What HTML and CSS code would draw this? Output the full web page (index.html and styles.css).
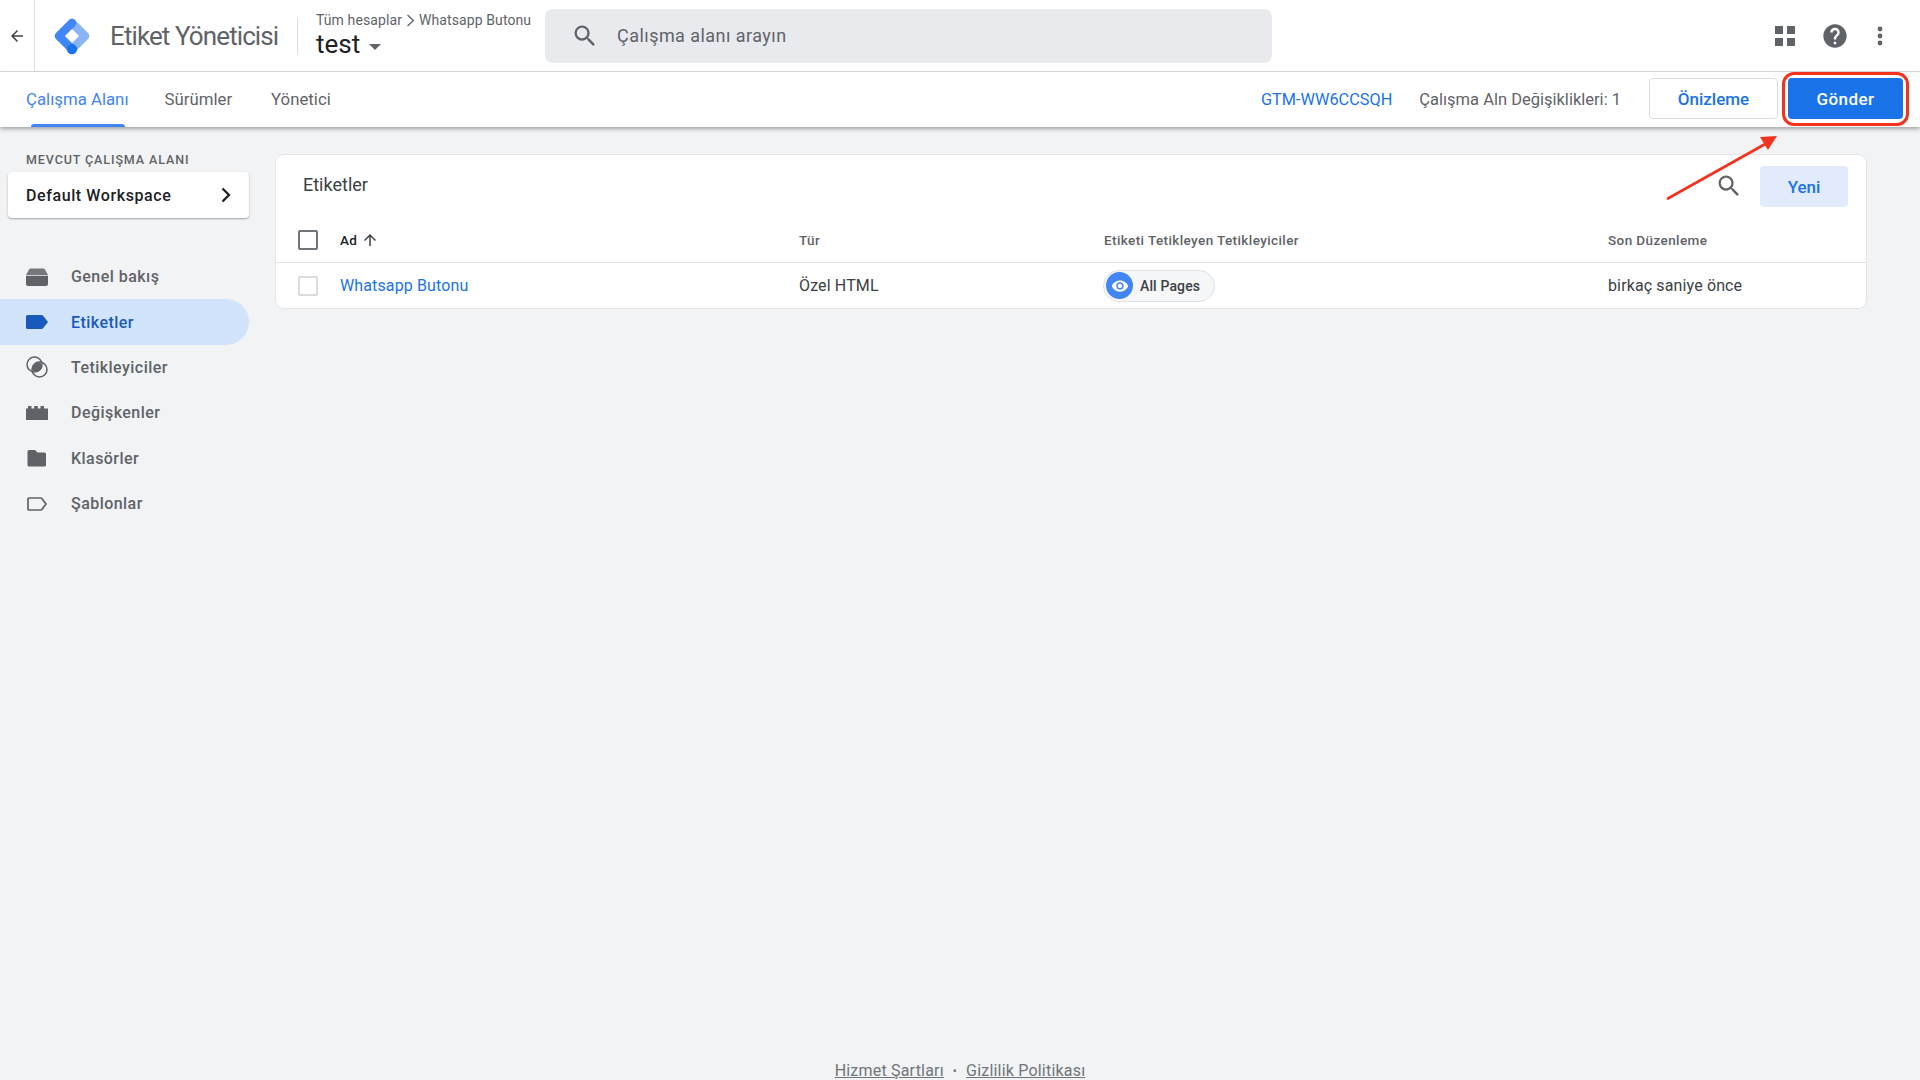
FILE: index.html
```html
<!DOCTYPE html>
<html lang="tr">
<head>
<meta charset="utf-8">
<title>Etiket Yöneticisi</title>
<link rel="stylesheet" href="styles.css">
</head>
<body>
<header class="topbar">
  <div class="back">
    <svg width="18" height="18" viewBox="0 0 24 24"><path fill="#3c4043" d="M20 11H7.830l5.590-5.590L12 4l-8 8 8 8 1.410-1.410L7.830 13H20z"/></svg>
  </div>
  <div class="brand">
    <svg class="logo" width="40" height="40" viewBox="0 0 36 36">
      <path fill="none" stroke="#8ab4f8" stroke-width="7.600" stroke-linecap="round" stroke-linejoin="round" d="M18 6.250 29.750 18 18 29.750"/>
      <path fill="none" stroke="#4285f4" stroke-width="7.600" stroke-linecap="round" stroke-linejoin="round" d="M18 6.250 6.250 18 18 29.750"/>
      <circle fill="#1a73e8" cx="18" cy="29.800" r="4.700"/>
    </svg>
    <span class="brand-name">Etiket Yöneticisi</span>
  </div>
  <div class="account">
    <div class="crumbs"><span>Tüm hesaplar</span>
      <svg width="9" height="13" viewBox="0 0 9 13"><path fill="none" stroke="#5f6368" stroke-width="1.300" d="M1.500 1l6 5.500-6 5.500"/></svg>
      <span>Whatsapp Butonu</span></div>
    <div class="container-name">test <span class="caret"></span></div>
  </div>
  <div class="search">
    <svg width="28" height="28" viewBox="0 0 24 24"><path fill="#5f6368" d="M15.500 14h-.79l-.28-.27A6.470 6.470 0 0 0 16 9.500 6.500 6.500 0 1 0 9.500 16c1.610 0 3.090-.59 4.230-1.570l.27.28v.79l5 4.990L20.490 19l-4.990-5zm-6 0C7.010 14 5 11.990 5 9.500S7.010 5 9.500 5 14 7.010 14 9.500 11.990 14 9.500 14z"/></svg>
    <span>Çalışma alanı arayın</span>
  </div>
  <div class="top-icons">
    <svg class="apps" width="20" height="20" viewBox="0 0 20 20"><path fill="#5f6368" d="M0 0h8v8H0zM12 0h8v8h-8zM0 12h8v8H0zM12 12h8v8h-8z"/></svg>
    <svg class="help" width="28" height="28" viewBox="0 0 24 24"><path fill="#5f6368" d="M12 2C6.480 2 2 6.480 2 12s4.480 10 10 10 10-4.480 10-10S17.520 2 12 2zm1 17h-2v-2h2v2zm2.070-7.750-.9.920C13.450 12.900 13 13.500 13 15h-2v-.5c0-1.100.450-2.100 1.170-2.830l1.240-1.260c.370-.360.590-.860.590-1.410 0-1.100-.900-2-2-2s-2 .900-2 2H8c0-2.210 1.790-4 4-4s4 1.790 4 4c0 .880-.360 1.680-.930 2.250z"/></svg>
    <svg class="more" width="8" height="20" viewBox="0 0 8 20"><circle fill="#5f6368" cx="4" cy="3" r="2.400"/><circle fill="#5f6368" cx="4" cy="10" r="2.400"/><circle fill="#5f6368" cx="4" cy="17" r="2.400"/></svg>
  </div>
</header>

<nav class="tabbar">
  <div class="tabs">
    <a class="tab tab-active">Çalışma Alanı</a>
    <a class="tab">Sürümler</a>
    <a class="tab">Yönetici</a>
  </div>
  <div class="tab-right">
    <a class="gtm-id">GTM-WW6CCSQH</a>
    <span class="changes">Çalışma Aln Değişiklikleri: 1</span>
    <button class="btn-preview">Önizleme</button>
    <button class="btn-submit">Gönder</button>
  </div>
  <span class="annot-box"></span>
</nav>

<svg class="annot-arrow" width="120" height="70" viewBox="0 0 120 70">
  <path fill="none" stroke="#f4321e" stroke-width="2.600" d="M2 66 102 10"/>
  <path fill="#f4321e" d="M112 3 95 4 103 17z"/>
</svg>

<div class="body">
  <aside class="sidebar">
    <div class="ws-label">MEVCUT ÇALIŞMA ALANI</div>
    <div class="ws-card">
      <span>Default Workspace</span>
      <svg width="12" height="16" viewBox="0 0 12 16"><path fill="none" stroke="#202124" stroke-width="2.300" d="M2.500 1.500 9 8l-6.500 6.500"/></svg>
    </div>
    <ul class="nav">
      <li class="nav-item">
        <svg width="22" height="18" viewBox="0 0 22 18"><path fill="#5f6368" d="M0 7 3 1.500A2 2 0 0 1 4.800.5h12.400a2 2 0 0 1 1.800 1L22 7H0z" opacity=".85"/><path fill="#5f6368" d="M0 7.800h22V16a2 2 0 0 1-2 2H2a2 2 0 0 1-2-2z"/></svg>
        <span>Genel bakış</span>
      </li>
      <li class="nav-item nav-active">
        <svg width="22" height="14" viewBox="0 0 22 14"><path fill="#185abc" d="M1.500 0H15.500a2 2 0 0 1 1.600.8L22 7l-4.900 6.200a2 2 0 0 1-1.600.8H1.500A1.500 1.500 0 0 1 0 12.500v-11A1.500 1.500 0 0 1 1.500 0z"/></svg>
        <span>Etiketler</span>
      </li>
      <li class="nav-item">
        <svg width="22" height="22" viewBox="0 0 22 22"><circle cx="8.500" cy="8.500" r="7.500" fill="none" stroke="#5f6368" stroke-width="1.500"/><circle cx="13.500" cy="13.500" r="7.500" fill="none" stroke="#5f6368" stroke-width="1.500"/><path fill="#5f6368" d="M6.200 13.900A7.500 7.500 0 0 1 13.900 6.200a7.500 7.500 0 0 1 1.900 5.900 7.500 7.500 0 0 1-3.700 3.700 7.500 7.500 0 0 1-5.900-1.900z"/></svg>
        <span>Tetikleyiciler</span>
      </li>
      <li class="nav-item">
        <svg width="22" height="14" viewBox="0 0 22 14"><path fill="#5f6368" d="M0 2.500h2V0h3.500v2.500h2.700V0h3.600v2.500h2.700V0H18v2.500h4V14H0z"/></svg>
        <span>Değişkenler</span>
      </li>
      <li class="nav-item">
        <svg width="22" height="18" viewBox="0 0 22 18"><path fill="#5f6368" d="M3 1h6l2.500 2.500H18.500a1.500 1.500 0 0 1 1.500 1.500v11a1.500 1.500 0 0 1-1.500 1.500H3A1.500 1.500 0 0 1 1.500 16V2.500A1.500 1.500 0 0 1 3 1z"/></svg>
        <span>Klasörler</span>
      </li>
      <li class="nav-item">
        <svg width="22" height="14" viewBox="0 0 22 14"><path fill="none" stroke="#5f6368" stroke-width="1.700" d="M3 1H15a1 1 0 0 1 .8.400L20 7l-4.200 5.600a1 1 0 0 1-.8.400H3a1 1 0 0 1-1-1V2a1 1 0 0 1 1-1z"/></svg>
        <span>Şablonlar</span>
      </li>
    </ul>
  </aside>

  <main class="content">
    <section class="card">
      <div class="card-head">
        <h1>Etiketler</h1>
        <svg class="card-search" width="28" height="28" viewBox="0 0 24 24"><path fill="#5f6368" d="M15.500 14h-.79l-.28-.27A6.470 6.470 0 0 0 16 9.500 6.500 6.500 0 1 0 9.500 16c1.610 0 3.090-.59 4.230-1.570l.27.28v.79l5 4.990L20.490 19l-4.990-5zm-6 0C7.010 14 5 11.990 5 9.500S7.010 5 9.500 5 14 7.010 14 9.500 11.990 14 9.500 14z"/></svg>
        <button class="btn-new">Yeni</button>
      </div>
      <div class="row row-head">
        <span class="check check-head"></span>
        <span class="col-name th-sort">Ad
          <svg width="18" height="18" viewBox="0 0 24 24"><path fill="#3c4043" d="M4 12l1.410 1.410L11 7.830V20h2V7.830l5.580 5.590L20 12l-8-8-8 8z"/></svg>
        </span>
        <span class="col-type">Tür</span>
        <span class="col-trig">Etiketi Tetikleyen Tetikleyiciler</span>
        <span class="col-date">Son Düzenleme</span>
      </div>
      <div class="row row-data">
        <span class="check"></span>
        <a class="col-name tag-link">Whatsapp Butonu</a>
        <span class="col-type">Özel HTML</span>
        <span class="col-trig">
          <span class="chip">
            <span class="chip-icon"><svg width="18" height="18" viewBox="0 0 24 24"><path fill="#fff" d="M12 4.500C7 4.500 2.730 7.610 1 12c1.730 4.390 6 7.500 11 7.500s9.270-3.110 11-7.500c-1.730-4.390-6-7.500-11-7.500zM12 17c-2.760 0-5-2.240-5-5s2.240-5 5-5 5 2.240 5 5-2.240 5-5 5zm0-8c-1.660 0-3 1.340-3 3s1.340 3 3 3 3-1.340 3-3-1.340-3-3-3z"/></svg></span>
            All Pages
          </span>
        </span>
        <span class="col-date">birkaç saniye önce</span>
      </div>
    </section>
  </main>
</div>

<footer class="footer">
  <a>Hizmet Şartları</a><span class="dot">•</span><a>Gizlilik Politikası</a>
</footer>
</body>
</html>
```

FILE: styles.css
```css
* { box-sizing: border-box; }
html, body { margin: 0; height: 100%; }
body {
  width: 1920px;
  height: 1080px;
  overflow: hidden;
  background: #f1f3f4;
  font-family: Roboto, "Noto Sans", sans-serif;
  color: #3c4043;
  display: flex;
  flex-direction: column;
  position: relative;
}

/* Top bar */
.topbar {
  height: 72px;
  flex: none;
  background: #fff;
  border-bottom: 1px solid #dadce0;
  display: flex;
  align-items: center;
}
.back {
  width: 35px;
  height: 71px;
  border-right: 1px solid #dadce0;
  display: flex;
  align-items: center;
  justify-content: center;
}
.brand {
  width: 263px;
  height: 36px;
  padding-left: 17px;
  display: flex;
  align-items: center;
  gap: 18px;
  border-right: 1px solid #dadce0;
}
.logo { flex: none; }
.brand-name { font-size: 26px; color: #5f6368; letter-spacing: -0.9px; white-space: nowrap; }
.account { width: 247px; padding-left: 18px; }
.crumbs {
  font-size: 14px;
  line-height: 16px;
  letter-spacing: .1px;
  color: #5f6368;
  display: flex;
  align-items: center;
  gap: 4px;
  white-space: nowrap;
}
.container-name { font-size: 26px; line-height: 30px; color: #202124; margin-top: 1px; }
.caret {
  display: inline-block;
  width: 0;
  height: 0;
  margin-left: 2px;
  vertical-align: 3px;
  border-left: 6px solid transparent;
  border-right: 6px solid transparent;
  border-top: 6px solid #5f6368;
}
.search {
  width: 727px;
  height: 54px;
  background: #e8eaed;
  border-radius: 8px;
  display: flex;
  align-items: center;
  padding-left: 26px;
  gap: 18px;
  font-size: 18px;
  letter-spacing: .45px;
  color: #5f6368;
}
.top-icons { flex: 1; height: 28px; display: flex; align-items: center; padding-left: 503px; }
.apps { flex: none; }
.help { flex: none; margin-left: 26px; }
.more { flex: none; margin-left: 27px; }

/* Tabs */
.tabbar {
  height: 55px;
  flex: none;
  background: #fff;
  display: flex;
  align-items: stretch;
  justify-content: space-between;
  box-shadow: 0 2px 4px rgba(60, 64, 67, .45);
  position: relative;
  z-index: 2;
}
.tabs { display: flex; padding-left: 26px; }
.tab {
  font-size: 16.800px;
  color: #5f6368;
  line-height: 55px;
  margin-right: 39px;
  position: relative;
  white-space: nowrap;
}
.tab-active { color: #4285f4; margin-right: 36px; }
.tab-active::after {
  content: "";
  position: absolute;
  left: 5px;
  right: 4px;
  bottom: 0;
  height: 3px;
  background: #4285f4;
  border-radius: 3px 3px 0 0;
}
.tab-right { display: flex; align-items: center; padding: 0 17px 2px 0; }
.gtm-id { font-size: 16.300px; color: #1a73e8; margin: 2px 27px 0 0; }
.changes { font-size: 16.500px; color: #5f6368; margin: 2px 28px 0 0; }
.btn-preview, .btn-submit {
  font-family: inherit;
  font-size: 17px;
  font-weight: 500;
  height: 41px;
  border-radius: 4px;
  cursor: pointer;
}
.btn-preview { width: 129px; background: #fff; color: #1a73e8; border: 1px solid #dadce0; margin-right: 10px; }
.btn-submit { width: 115px; background: #1a73e8; color: #fff; border: 0; letter-spacing: .4px; }
.annot-box {
  position: absolute;
  left: 1782px;
  top: 0;
  width: 127px;
  height: 54px;
  border: 3px solid #f4321e;
  border-radius: 12px;
  pointer-events: none;
}
.annot-arrow { position: absolute; left: 1665px; top: 133px; z-index: 3; }

/* Body */
.body { flex: 1; display: flex; min-height: 0; }
.sidebar { width: 249px; flex: none; padding-top: 25px; }
.ws-label { font-size: 12.500px; font-weight: 500; letter-spacing: .9px; color: #5f6368; padding-left: 26px; line-height: 15px; }
.ws-card {
  margin: 5px 0 0 8px;
  height: 46px;
  background: #fff;
  border-radius: 4px;
  box-shadow: 0 1px 2px rgba(60, 64, 67, .45);
  display: flex;
  align-items: center;
  justify-content: space-between;
  padding: 0 17px 0 18px;
  font-size: 16px;
  font-weight: 500;
  color: #202124;
  letter-spacing: .6px;
}
.nav { list-style: none; margin: 36px 0 0; padding: 0; }
.nav-item {
  height: 45.400px;
  display: flex;
  align-items: center;
  gap: 23px;
  padding-left: 26px;
  font-size: 16px;
  font-weight: 500;
  letter-spacing: .45px;
  color: #5f6368;
  border-radius: 0 23px 23px 0;
}
.nav-item svg { flex: none; width: 22px; }
.nav-active { background: #d2e3fc; color: #185abc; }

/* Content */
.content { flex: 1; padding: 27px 0 0 26px; }
.card {
  width: 1592px;
  height: 155px;
  background: #fff;
  border: 1px solid #e3e5e8;
  border-radius: 9px;
  overflow: hidden;
}
.card-head {
  height: 71px;
  display: flex;
  align-items: flex-start;
  padding: 0 18px 0 27px;
}
.card-head h1 { flex: 1; margin: 18px 0 0; font-size: 18px; line-height: 24px; font-weight: 400; color: #3c4043; }
.card-search { flex: none; margin: 17px 17px 0 0; }
.btn-new {
  width: 88px;
  height: 41px;
  margin-top: 11px;
  background: #e1ebfb;
  color: #1a73e8;
  border: 0;
  border-radius: 4px;
  font-family: inherit;
  font-size: 17px;
  font-weight: 500;
}
.row {
  display: grid;
  grid-template-columns: 42px 459px 305px 504px 1fr;
  align-items: center;
  padding-left: 22px;
}
.row-head {
  height: 37px;
  padding-bottom: 8px;
  border-bottom: 1px solid #dfe1e5;
  font-size: 13.500px;
  font-weight: 500;
  color: #5f6368;
  letter-spacing: .4px;
}
.row-data { height: 45px; font-size: 16px; letter-spacing: .13px; color: #3c4043; }
.check { width: 20px; height: 20px; border: 2px solid #dadce0; border-radius: 2px; display: block; }
.check-head { border-color: #70757a; }
.th-sort { color: #202124; display: flex; align-items: center; gap: 4px; }
.tag-link { color: #1a73e8; }
.chip {
  display: inline-flex;
  align-items: center;
  height: 32px;
  width: 112px;
  margin-left: -1px;
  border: 1px solid #dfe1e5;
  border-radius: 16px;
  background: #f6f7f8;
  font-size: 14px;
  font-weight: 500;
  color: #3c4043;
  padding-left: 2px;
  gap: 7px;
}
.chip-icon {
  width: 27px;
  height: 27px;
  border-radius: 50%;
  background: #4285f4;
  display: flex;
  align-items: center;
  justify-content: center;
  flex: none;
}

/* Footer */
.footer {
  flex: none;
  height: 19px;
  display: flex;
  justify-content: center;
  align-items: flex-start;
  font-size: 16px;
  line-height: 20px;
  letter-spacing: .2px;
  color: #70757a;
}
.footer a { text-decoration: underline; }
.dot { margin: 0 9px; font-size: 12px; }
```
